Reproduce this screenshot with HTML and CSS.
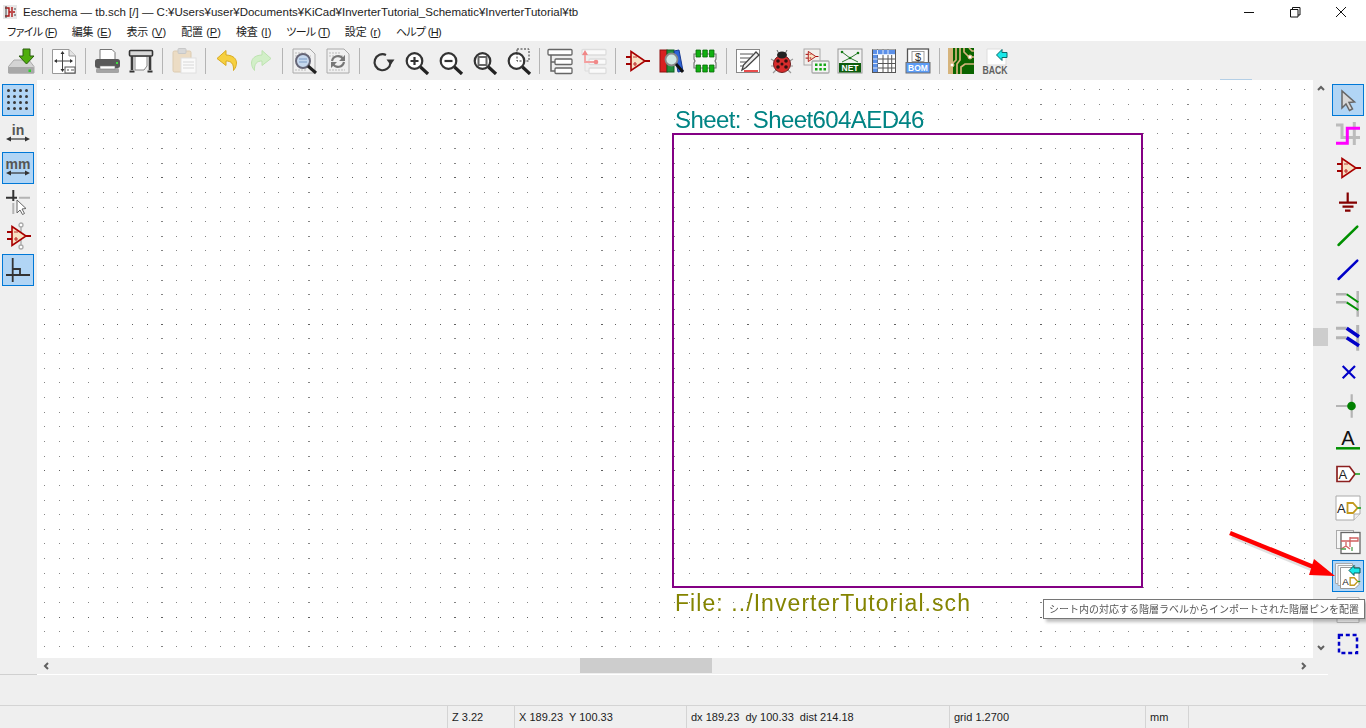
FILE: index.html
```html
<!DOCTYPE html>
<html>
<head lang="ja">
    <meta charset="UTF-8">
    <title>Eeschema</title>
    <link rel="stylesheet" href="styles.css">
</head>
<body>
<svg class="defs">
    <symbol id="opamp" viewBox="0 0 28 28">
        <path d="M3 10h5M3 17h5M22 14h5" stroke="#a00000" stroke-width="1.8" fill="none"/>
        <path d="M8 4.5L22 14 8 23.5z" fill="#f7e2c4" stroke="#a80000" stroke-width="1.6"/>
        <path d="M10 10h4M10 17h4M12 15v4" stroke="#c03030" stroke-width="1.2" fill="none"/>
    </symbol>
    <symbol id="lens" viewBox="0 0 28 28">
        <circle cx="11.5" cy="14" r="7.8" fill="#fff" stroke="#333" stroke-width="2.2"/>
        <path d="M17.5 20l7.5 7" stroke="#222" stroke-width="3.2"/>
    </symbol>
    <symbol id="adlabel" viewBox="0 0 28 28">
        <text x="3" y="19" class="ad-text">A</text>
        <path d="M13.5 9h5.5l4.5 5-4.5 5h-5.5z" fill="#fff" stroke="#c49a20" stroke-width="1.8"/>
        <path d="M23.5 14H27" stroke="#20a020" stroke-width="1.6"/>
    </symbol>
</svg>

<div class="titlebar">
    <svg class="app-icon" viewBox="0 0 14 14">
        <rect width="14" height="14" fill="#e8e8e8"/>
        <path d="M2 3h4v8H2M6 7h6M9 2v4M9 8v4" stroke="#b01818" stroke-width="1.4" fill="none"/>
        <path d="M3 1v12M11 4h2M11 10h2" stroke="#444" stroke-width="1" fill="none"/>
    </svg>
    <span class="title-text">Eeschema — tb.sch [/] — C:¥Users¥user¥Documents¥KiCad¥InverterTutorial_Schematic¥InverterTutorial¥tb</span>
    <div class="win-btn">
        <svg width="12" height="12" viewBox="0 0 12 12"><path d="M1 6.5h10" stroke="#111" fill="none"/></svg>
    </div>
    <div class="win-btn">
        <svg width="12" height="12" viewBox="0 0 12 12"><path d="M1.5 3.5h7.5v7.5h-7.5zM3.5 3.5v-2h7.5v7.5h-2" stroke="#111" fill="none"/></svg>
    </div>
    <div class="win-btn">
        <svg width="12" height="12" viewBox="0 0 12 12"><path d="M1 1l10 10M11 1l-10 10" stroke="#111" fill="none"/></svg>
    </div>
</div>

<ul class="menubar">
    <li class="kana">ファイル (<u>F</u>)</li>
    <li>編集 (<u>E</u>)</li>
    <li>表示 (<u>V</u>)</li>
    <li>配置 (<u>P</u>)</li>
    <li>検査 (<u>I</u>)</li>
    <li class="kana">ツール (<u>T</u>)</li>
    <li>設定 (<u>r</u>)</li>
    <li class="kana">ヘルプ (<u>H</u>)</li>
</ul>

<div class="toolbar">
    <!-- save -->
    <div class="tool"><svg class="ico" viewBox="0 0 28 28">
        <path d="M7 13h15l5 6.5V26H1.5v-6.5z" fill="#d4d4d4" stroke="#aaa"/>
        <rect x="1.5" y="20" width="25.5" height="6.5" rx="1" fill="#a8a8a8"/>
        <rect x="21.5" y="22.5" width="2.5" height="2.5" fill="#30d030"/>
        <path d="M16 2h7v7h4l-7.5 8L12 9h4z" fill="#4fae0c" stroke="#2c5c10"/>
    </svg></div>
    <div class="sep"></div>
    <!-- page settings -->
    <div class="tool"><svg class="ico" viewBox="0 0 28 28">
        <path d="M2.5 2.5H19L25.5 9v17.5h-23z" fill="#fff" stroke="#999"/>
        <path d="M19 2.5V9h6.5" fill="#e4e4e4" stroke="#999"/>
        <path d="M12.5 5v19M5 14h17" stroke="#444"/>
        <path d="M12.5 4l-2 3h4zM12.5 25l-2-3h4zM4 14l3-2v4zM23 14l-3-2v4z" fill="#333"/>
        <rect x="15" y="20" width="10" height="6" fill="#fff" stroke="#555"/>
        <path d="M17 23h2M21 23h3" stroke="#555"/>
    </svg></div>
    <div class="sep"></div>
    <!-- print -->
    <div class="tool"><svg class="ico" viewBox="0 0 28 28">
        <path d="M7 2.5h12l3 3V13H7z" fill="#fff" stroke="#777"/>
        <rect x="2" y="12" width="25" height="9" rx="2.5" fill="#585858"/>
        <rect x="3" y="21" width="23" height="5" rx="1.5" fill="#a4a4a4"/>
        <rect x="7" y="19" width="15" height="3" fill="#fff" stroke="#777" stroke-width=".6"/>
        <rect x="23" y="15" width="2" height="2" fill="#40e040"/>
    </svg></div>
    <!-- plot -->
    <div class="tool"><svg class="ico" viewBox="0 0 28 28">
        <path d="M8 9h12v10l-3 4H8z" fill="#fff" stroke="#888"/>
        <rect x="2.5" y="3.5" width="23" height="5.5" rx="1" fill="#d8d8d8" stroke="#333" stroke-width="1.6"/>
        <path d="M5 9v14M23 9v14" stroke="#3c3c3c" stroke-width="2.6"/>
        <path d="M2.5 24.5h5M20.5 24.5h5" stroke="#333" stroke-width="2"/>
    </svg></div>
    <div class="sep"></div>
    <!-- paste, disabled -->
    <div class="tool"><svg class="ico" viewBox="0 0 28 28">
        <rect x="3" y="4" width="18" height="21" rx="1.5" fill="#ecdcc4" stroke="#dccbb0"/>
        <rect x="8" y="1.5" width="8" height="5" rx="1" fill="#d8d8d8" stroke="#c8c8c8"/>
        <rect x="11" y="11" width="15" height="15" fill="#fafafa" stroke="#e0e0e0"/>
        <path d="M13 15h11M13 18h11M13 21h11" stroke="#d8d8d8"/>
    </svg></div>
    <div class="sep"></div>
    <!-- undo, redo -->
    <div class="tool"><svg class="ico" viewBox="0 0 28 28">
        <path d="M13 3.5l-9 8 9 7V14c5 0 8 2.5 7.5 9.5 5-6 4.5-15-7.5-15.500z" fill="#f6d040" stroke="#d8aa20"/>
    </svg></div>
    <div class="tool"><svg class="ico" viewBox="0 0 28 28">
        <path d="M15 3.5l9 8-9 7V14c-5 0-8 2.5-7.5 9.5-5-6-4.5-15 7.5-15.500z" fill="#d2efc8" stroke="#bde3b0"/>
    </svg></div>
    <div class="sep"></div>
    <!-- find, find and replace -->
    <div class="tool"><svg class="ico" viewBox="0 0 28 28">
        <path d="M3 2h17l5 5v19H3z" fill="#f0f0f0" stroke="#aaa"/>
        <path d="M5 6h12M5 9h16M5 23h12" stroke="#bbb" stroke-dasharray="2 1"/>
        <circle cx="13" cy="14" r="7" fill="#c6d8ee" stroke="#667" stroke-width="2"/>
        <path d="M9 12h8M9 15h8" stroke="#7a9ac4"/>
        <path d="M18 19l8 7" stroke="#222" stroke-width="3"/>
    </svg></div>
    <div class="tool"><svg class="ico" viewBox="0 0 28 28">
        <path d="M3 2h17l5 5v19H3z" fill="#f0f0f0" stroke="#aaa"/>
        <path d="M5 6h12M5 9h16M5 23h16" stroke="#bbb" stroke-dasharray="2 1"/>
        <path d="M8 14a6 6 0 0 1 11-2M20 15a6 6 0 0 1-11 2" stroke="#777" stroke-width="2.2" fill="none"/>
        <path d="M21 8v6h-6zM7 21v-6h6z" fill="#777"/>
    </svg></div>
    <div class="sep"></div>
    <!-- redraw -->
    <div class="tool tool-wide"><svg class="ico" viewBox="0 0 28 28">
        <path d="M18 8A8 8 0 1 0 22.5 16" stroke="#333" stroke-width="2.2" fill="none"/>
        <path d="M18.5 12.5h8l-4 5.500z" fill="#333"/>
    </svg></div>
    <!-- zoom in, out, fit, selection -->
    <div class="tool"><svg class="ico" viewBox="0 0 28 28">
        <use href="#lens"/>
        <path d="M7.5 14h8M11.5 10v8" stroke="#333" stroke-width="2.2"/>
    </svg></div>
    <div class="tool"><svg class="ico" viewBox="0 0 28 28">
        <use href="#lens"/>
        <path d="M7.5 14h8" stroke="#333" stroke-width="2.2"/>
    </svg></div>
    <div class="tool"><svg class="ico" viewBox="0 0 28 28">
        <use href="#lens"/>
        <rect x="7.5" y="10" width="8" height="8" fill="none" stroke="#666" stroke-width="2"/>
    </svg></div>
    <div class="tool"><svg class="ico" viewBox="0 0 28 28">
        <use href="#lens"/>
        <rect x="12" y="2" width="12" height="12" fill="none" stroke="#333" stroke-dasharray="2 1.5"/>
    </svg></div>
    <div class="sep sep-tight"></div>
    <!-- hierarchy, leave sheet -->
    <div class="tool"><svg class="ico" viewBox="0 0 28 28">
        <path d="M5 8v16h4M5 15h4" stroke="#666" stroke-width="1.5" fill="none"/>
        <rect x="2" y="2.5" width="24" height="5.5" rx="1" fill="#fff" stroke="#666" stroke-width="1.3"/>
        <rect x="9" y="12" width="17" height="5.5" rx="1" fill="#fff" stroke="#666" stroke-width="1.3"/>
        <rect x="9" y="21" width="17" height="5.5" rx="1" fill="#fff" stroke="#666" stroke-width="1.3"/>
    </svg></div>
    <div class="tool"><svg class="ico" viewBox="0 0 28 28">
        <rect x="2" y="2.5" width="24" height="5.5" rx="1" fill="#fafafa" stroke="#ddd" stroke-width="1.3"/>
        <rect x="9" y="12" width="17" height="5.5" rx="1" fill="#fafafa" stroke="#ddd" stroke-width="1.3"/>
        <rect x="9" y="21" width="17" height="5.5" rx="1" fill="#fafafa" stroke="#ddd" stroke-width="1.3"/>
        <path d="M5 8v16h4" stroke="#ddd" fill="none"/>
        <path d="M5 7v8h10" stroke="#f4a0a0" stroke-width="1.8" fill="none"/>
        <path d="M5 3l-3 5h6z" fill="#f08888"/>
        <circle cx="16" cy="15" r="2.3" fill="#f08888"/>
    </svg></div>
    <div class="sep"></div>
    <!-- symbol editor, library browser, footprint editor -->
    <div class="tool"><svg class="ico"><use href="#opamp"/></svg></div>
    <div class="tool"><svg class="ico" viewBox="0 0 28 28">
        <rect x="3" y="3" width="7" height="22" fill="#d82020" stroke="#901010"/>
        <rect x="10" y="3" width="7" height="22" fill="#20903c" stroke="#106020"/>
        <path d="M17 4l5-1 4 21-5 1z" fill="#2c62d8" stroke="#1a3a90"/>
        <circle cx="14.5" cy="12.5" r="6" fill="#cfe6e2" stroke="#888" stroke-width="1.8"/>
        <path d="M19 17l7 8" stroke="#111" stroke-width="3"/>
    </svg></div>
    <div class="tool"><svg class="ico" viewBox="0 0 28 28">
        <path d="M3 7h22v5l-1 2 1 2v5H3v-5l1-2-1-2z" fill="#f6f6f6" stroke="#777" stroke-width="1.2"/>
        <path d="M5 3h4.5v7H5zM11.8 3h4.5v7h-4.5zM18.5 3H23v7h-4.5zM5 18h4.5v7H5zM11.8 18h4.5v7h-4.5zM18.5 18H23v7h-4.5z" fill="#10b010" stroke="#0a6a0a" stroke-width=".8"/>
    </svg></div>
    <div class="sep"></div>
    <!-- annotate -->
    <div class="tool"><svg class="ico" viewBox="0 0 28 28">
        <rect x="2.5" y="2.5" width="23" height="23" fill="#fff" stroke="#888"/>
        <path d="M6 7h13M6 11h10M6 15h7M6 19h4" stroke="#555"/>
        <path d="M8 23l1.5-5L22 5l3 3-13 12.5z" fill="#eee" stroke="#444" stroke-width="1.3"/>
        <path d="M10 24h14" stroke="#e01010" stroke-width="1.5"/>
    </svg></div>
    <!-- erc -->
    <div class="tool"><svg class="ico" viewBox="0 0 28 28">
        <path d="M3 12l5 3M3 19h5M5 26l4-4M25 12l-5 3M25 19h-5M23 26l-4-4" stroke="#999" stroke-width="1.2"/>
        <circle cx="14" cy="17" r="8.5" fill="#d82c2c" stroke="#702020"/>
        <path d="M9 3l2 4M19 3l-2 4" stroke="#666"/>
        <ellipse cx="14" cy="8" rx="5" ry="3.5" fill="#222"/>
        <circle cx="10" cy="14" r="1.8" fill="#311"/><circle cx="18" cy="14" r="1.8" fill="#311"/>
        <circle cx="10" cy="20" r="1.8" fill="#311"/><circle cx="18" cy="20" r="1.8" fill="#311"/>
        <circle cx="14" cy="17" r="1.5" fill="#311"/>
    </svg></div>
    <!-- assign footprints -->
    <div class="tool"><svg class="ico" viewBox="0 0 28 28">
        <rect x="2" y="2" width="16" height="16" fill="#f2efec" stroke="#aaa"/>
        <svg x="2" y="2" width="15" height="15" viewBox="0 0 28 28"><use href="#opamp"/></svg>
        <rect x="10" y="14" width="17" height="12" rx="1" fill="#f4f4f4" stroke="#aaa" stroke-width="1.3"/>
        <path d="M13 16.5h2.5V19H13zM17.3 16.5h2.5V19h-2.5zM21.5 16.5H24V19h-2.5zM13 21h2.5v2.5H13zM17.3 21h2.5v2.5h-2.5zM21.5 21H24v2.5h-2.5z" fill="#14a814"/>
    </svg></div>
    <!-- netlist -->
    <div class="tool"><svg class="ico" viewBox="0 0 28 28">
        <rect x="2" y="2" width="24" height="24" fill="#f2f2f2" stroke="#999"/>
        <path d="M6 5l8 6 8-5M6 15l8-4 8 4" stroke="#2c7a2c" fill="none"/>
        <circle cx="6" cy="5" r="1.3" fill="#147a14"/><circle cx="22" cy="6" r="1.3" fill="#147a14"/>
        <circle cx="14" cy="11" r="1.3" fill="#147a14"/>
        <rect x="3" y="16" width="22" height="9.5" fill="#0c5c0c"/>
        <text x="14" y="24" class="ico-text">NET</text>
    </svg></div>
    <!-- bom editor -->
    <div class="tool"><svg class="ico" viewBox="0 0 28 28">
        <rect x="2.5" y="2.5" width="23" height="23" fill="#fff"/>
        <path d="M2 3h24M2 7.5h24M2 12h24M2 16.5h24M2 21h24M2 25.5h24M2.5 2.5v23M7.5 2.5v23M13 2.5v23M18 2.5v23M25.5 2.5v23M21.7 7.5v18" stroke="#555" fill="none"/>
        <path d="M3 3h22v4.5H7.5V25H3z" fill="#5b90e8"/>
        <path d="M3 12h4.5M3 16.5h4.5M3 21h4.5M7.5 3v4.5M13 3v4.5M18 3v4.5M3 7.5h22" stroke="#dde8fa"/>
    </svg></div>
    <!-- bom -->
    <div class="tool"><svg class="ico" viewBox="0 0 28 28">
        <rect x="3.5" y="2" width="21" height="17" fill="#fff" stroke="#555" stroke-width="1.3"/>
        <rect x="8" y="4.5" width="12" height="10" fill="#fff" stroke="#888" stroke-width=".8"/>
        <text x="14" y="13.5" class="ico-dollar">$</text>
        <rect x="2" y="15.5" width="24" height="10.5" fill="#5c9cf5" stroke="#707070"/>
        <text x="14" y="23.5" class="ico-text">BOM</text>
    </svg></div>
    <div class="sep"></div>
    <!-- pcbnew, back -->
    <div class="tool"><svg class="ico" viewBox="0 0 28 28">
        <rect x="1" y="1" width="26" height="26" fill="#0a6400"/>
        <rect x="1" y="1" width="5" height="26" fill="#d6b47c"/>
        <path d="M9 1v12l-4 4v10M13 1v12l-3 4v10M17 1v4l5 5h5M22 1l3 3h2M14 27v-7l4-3h9" stroke="#d6b47c" stroke-width="1.7" fill="none"/>
        <circle cx="5" cy="18" r="2" fill="#fff" stroke="#d6b47c"/>
        <circle cx="23" cy="10" r="2" fill="#fff" stroke="#d6b47c"/>
    </svg></div>
    <div class="tool"><svg class="ico" viewBox="0 0 28 28">
        <path d="M6 2h14l5 5v11H6z" fill="#fff" stroke="#ddd"/>
        <path d="M15.5 8L21 2.5v3h5v5h-5v3z" fill="#18e8e8" stroke="#0a6a6a"/>
        <text x="14" y="26.5" textLength="25" lengthAdjust="spacingAndGlyphs" class="back-text">BACK</text>
    </svg></div>
</div>

<div class="main">
    <div class="left-tools">
        <div class="side-tool selected"><svg class="ico" viewBox="0 0 28 28">
            <path d="M4.5 4.5h0M10.5 4.5h0M16.5 4.5h0M22.5 4.5h0M4.5 10.5h0M10.5 10.5h0M16.5 10.5h0M22.5 10.5h0M4.5 16.5h0M10.5 16.5h0M16.5 16.5h0M22.5 16.5h0M4.5 22.5h0M10.5 22.5h0M16.5 22.5h0M22.5 22.5h0" stroke="#3a3a3a" stroke-width="3" stroke-linecap="round"/>
        </svg></div>
        <div class="side-tool"><svg class="ico" viewBox="0 0 28 28">
            <text x="14" y="15" class="unit-text">in</text>
            <path d="M4 19h20" stroke="#333" stroke-width="1.2"/>
            <path d="M2 19l5-2.5v5zM26 19l-5-2.5v5z" fill="#333"/>
        </svg></div>
        <div class="side-tool selected"><svg class="ico" viewBox="0 0 28 28">
            <text x="14" y="15" class="unit-text">mm</text>
            <path d="M4 19h20" stroke="#333" stroke-width="1.2"/>
            <path d="M2 19l5-2.5v5zM26 19l-5-2.5v5z" fill="#333"/>
        </svg></div>
        <div class="side-tool"><svg class="ico" viewBox="0 0 28 28">
            <path d="M15 9.7h11M9.3 15v11" stroke="#b4b4b4" stroke-width="2"/>
            <path d="M2 9.7h11M9.3 2v11" stroke="#333" stroke-width="2"/>
            <path d="M13 12v13l3-3 2.5 4.5 2-1-2.5-4.5 4-.5z" fill="#fff" stroke="#666"/>
        </svg></div>
        <div class="side-tool"><svg class="ico" viewBox="0 0 28 28">
            <path d="M17 4v20" stroke="#b0b0b0" stroke-width="1.5"/>
            <circle cx="17" cy="3" r="2" fill="#fff" stroke="#aaa" stroke-width="1.3"/>
            <circle cx="17" cy="25" r="2" fill="#fff" stroke="#aaa" stroke-width="1.3"/>
            <use href="#opamp" width="28" height="28"/>
        </svg></div>
        <div class="side-tool selected"><svg class="ico" viewBox="0 0 28 28">
            <path d="M8.7 2v24M2 19h24M9 13h7v6" stroke="#333" stroke-width="1.8" fill="none"/>
        </svg></div>
    </div>

    <div class="workspace">
        <div class="work-row">
            <div class="sheet-canvas">
                <canvas id="grid" width="1276" height="578"></canvas>
                <div class="sheet-name">Sheet: Sheet604AED46</div>
                <div class="sheet-box"></div>
                <div class="sheet-file">File: ../InverterTutorial.sch</div>
                <div class="stale-mark"></div>
            </div>
            <div class="vscroll">
                <svg class="chev" viewBox="0 0 8 8"><path d="M1 6l3-3 3 3" stroke="#606060" stroke-width="2" fill="none"/></svg>
                <div class="vthumb"></div>
                <svg class="chev chev-end" viewBox="0 0 8 8"><path d="M1 2l3 3 3-3" stroke="#606060" stroke-width="2" fill="none"/></svg>
            </div>
        </div>
        <div class="hscroll">
            <svg class="chev" viewBox="0 0 8 8"><path d="M6 1L3 4l3 3" stroke="#606060" stroke-width="2" fill="none"/></svg>
            <div class="hthumb"></div>
            <svg class="chev" viewBox="0 0 8 8"><path d="M2 1l3 3-3 3" stroke="#606060" stroke-width="2" fill="none"/></svg>
        </div>
        <div class="canvas-edge"></div>
    </div>

    <div class="right-tools">
        <div class="side-tool selected"><svg class="ico" viewBox="0 0 28 28">
            <path d="M8 5v17l4-4 3.5 6.5 3-1.5-3.500-6.500 5.500-.5z" fill="#d8d8d8" stroke="#666" stroke-width="1.5"/>
        </svg></div>
        <div class="side-tool"><svg class="ico" viewBox="0 0 28 28">
            <path d="M2 5h6v12.5h18M20.3 2v23" stroke="#bcbcbc" stroke-width="3" fill="none"/>
            <path d="M26 8.3H13.3v15H2" stroke="#ff00ff" stroke-width="3" fill="none"/>
        </svg></div>
        <div class="side-tool"><svg class="ico"><use href="#opamp"/></svg></div>
        <div class="side-tool"><svg class="ico" viewBox="0 0 28 28">
            <path d="M13.7 4.5V15M5 14.7h18M8.5 18.7h11M11 22.7h5.5" stroke="#840000" stroke-width="2.2"/>
        </svg></div>
        <div class="side-tool"><svg class="ico" viewBox="0 0 28 28">
            <path d="M4.5 23L23.3 4.7" stroke="#009000" stroke-width="2.5" stroke-linecap="round"/>
        </svg></div>
        <div class="side-tool"><svg class="ico" viewBox="0 0 28 28">
            <path d="M4.5 23L23.3 4.7" stroke="#0000c8" stroke-width="2.5" stroke-linecap="round"/>
        </svg></div>
        <div class="side-tool"><svg class="ico" viewBox="0 0 28 28">
            <path d="M2 4.3h10.7M2 12.3h10.7M23.7 1v25.7" stroke="#b4b4b4" stroke-width="2.5"/>
            <path d="M12.7 4.3l11.6 8M12.7 12.3l11.6 7.7" stroke="#009000" stroke-width="2"/>
        </svg></div>
        <div class="side-tool"><svg class="ico" viewBox="0 0 28 28">
            <path d="M2 4.3h10.7M2 13.7h10.7M23.7 1v25.7" stroke="#b4b4b4" stroke-width="3"/>
            <path d="M12.7 4.3L25 12.7M12.7 13.7L25 21.7" stroke="#0000c8" stroke-width="3.5"/>
        </svg></div>
        <div class="side-tool"><svg class="ico" viewBox="0 0 28 28">
            <path d="M8.7 8L21 20.3M21 8L8.7 20.3" stroke="#0000c8" stroke-width="2.2"/>
        </svg></div>
        <div class="side-tool"><svg class="ico" viewBox="0 0 28 28">
            <path d="M2 14h15.5M17.7 2.3v23.4" stroke="#b4b4b4" stroke-width="2.2"/>
            <circle cx="17.5" cy="14" r="4.3" fill="#008000"/>
        </svg></div>
        <div class="side-tool"><svg class="ico" viewBox="0 0 28 28">
            <text x="13.8" y="18.5" class="big-a">A</text>
            <path d="M2 22.3h24" stroke="#009000" stroke-width="2.5"/>
        </svg></div>
        <div class="side-tool"><svg class="ico" viewBox="0 0 28 28">
            <path d="M3 6.5h12.5L21 14l-5.500 7.500H3z" fill="#fff" stroke="#8c2020" stroke-width="1.7"/>
            <text x="4.5" y="19" class="ad-text">A</text>
            <path d="M21 14h5" stroke="#20a020" stroke-width="1.6"/>
        </svg></div>
        <div class="side-tool"><svg class="ico" viewBox="0 0 28 28">
            <path d="M2 2h24v18l-6 6H2z" fill="#fff" stroke="#aaa"/>
            <path d="M26 20h-6v6" fill="#eee" stroke="#aaa"/>
            <use href="#adlabel" width="28" height="28"/>
        </svg></div>
        <div class="side-tool"><svg class="ico" viewBox="0 0 28 28">
            <rect x="2.5" y="2.5" width="17" height="18" fill="#f6f6f6" stroke="#aaa"/>
            <rect x="7" y="4.5" width="19" height="21" fill="#fff" stroke="#666" stroke-width="1.3"/>
            <path d="M16 9v4h8v-3h-8M7 13h9M16 13v6M7 21l5-3 4 3M12 18v-4" stroke="#d06060" stroke-width="1.3" fill="none"/>
            <path d="M7 21h5M18 19v4" stroke="#50a050" stroke-width="1.3" fill="none"/>
        </svg></div>
        <div class="side-tool selected"><svg class="ico" viewBox="0 0 28 28">
            <path d="M1.5 1.5h17v20h-17z" fill="#f4f8fc" stroke="#aaa"/>
            <path d="M4 3.5h17v20H4z" fill="#fafafa" stroke="#aaa"/>
            <path d="M6.5 5.5H25v17l-4 4H6.5z" fill="#fff" stroke="#999"/>
            <path d="M15 8.5l5-5V6h6v5h-6v2.5z" fill="#18e8e8" stroke="#0a5a5a"/>
            <svg x="6" y="9" width="21" height="21" viewBox="0 0 28 28"><use href="#adlabel"/></svg>
        </svg></div>
        <div class="side-tool"><svg class="ico" viewBox="0 0 28 28">
            <path d="M3 1.5h22v25H3z" fill="#fafafa" stroke="#bbb"/>
        </svg></div>
        <div class="side-tool"><svg class="ico" viewBox="0 0 28 28">
            <rect x="5" y="5" width="18" height="18" fill="none" stroke="#0000c8" stroke-width="2.5" stroke-dasharray="4 2.8"/>
        </svg></div>
    </div>
</div>

<div class="msg-panel"></div>
<div class="statusbar">
    <div class="status-gap"></div>
    <div class="status-item status-zoom">Z 3.22</div>
    <div class="status-item status-abs">X 189.23&nbsp; Y 100.33</div>
    <div class="status-item status-rel">dx 189.23&nbsp; dy 100.33&nbsp; dist 214.18</div>
    <div class="status-item status-grid">grid 1.2700</div>
    <div class="status-item status-unit">mm</div>
    <div class="status-item"></div>
</div>

<div class="tooltip">シート内の対応する階層ラベルからインポートされた階層ピンを配置</div>
<svg class="red-arrow" viewBox="0 0 1366 728">
    <path d="M1231 533L1316 568" stroke="#000" stroke-opacity=".12" stroke-width="5" transform="translate(1 3)"/>
    <path d="M1230 533L1316 568" stroke="#ff0000" stroke-width="4.5"/>
    <path d="M1335 576L1314 559 1309 575z" fill="#ff0000"/>
</svg>
<script src="script.js"></script>
</body>
</html>
```
FILE: styles.css
```css
*{
    margin: 0;
    padding: 0;
    box-sizing: border-box;
}
ul,ol{
    list-style: none;
}
body{
    width: 1366px;
    height: 728px;
    overflow: hidden;
    position: relative;
    display: flex;
    flex-direction: column;
    background: #ffffff;
    font-family: "Liberation Sans", "Noto Sans CJK JP", sans-serif;
    font-size: 12px;
    color: #1c1c1c;
}
.defs{
    display: none;
}
.titlebar{
    height: 24px;
    display: flex;
    align-items: center;
    padding-right: 2px;
}
.app-icon{
    width: 14px;
    height: 14px;
    margin-left: 3px;
    margin-right: 6px;
}
.title-text{
    flex: 1;
    font-size: 11.5px;
}
.win-btn{
    width: 46px;
    height: 24px;
    display: flex;
    align-items: center;
    justify-content: center;
}
.menubar{
    height: 17px;
    display: flex;
    gap: 15px;
    padding-left: 7px;
    font-family: "Liberation Sans", "Noto Sans CJK JP", sans-serif;
    font-size: 11px;
    font-feature-settings: "palt";
    line-height: 17px;
}
.menubar .kana{
    letter-spacing: -0.7px;
}
.toolbar{
    height: 39px;
    display: flex;
    align-items: center;
    padding-left: 4px;
    background: #efefef;
}
.tool{
    width: 34px;
    height: 39px;
    display: flex;
    align-items: center;
    justify-content: center;
}
.tool-wide{
    width: 36px;
}
.sep{
    width: 1px;
    height: 26px;
    margin: 0 4px;
    background: #b4b4b4;
}
.sep-tight{
    margin: 0 3px;
}
.ico{
    width: 28px;
    height: 28px;
    display: block;
}
.ico-text{
    font-family: "Liberation Sans", sans-serif;
    font-size: 8.5px;
    font-weight: bold;
    fill: #ffffff;
    text-anchor: middle;
}
.ico-dollar{
    font-family: "Liberation Sans", sans-serif;
    font-size: 11px;
    fill: #333333;
    text-anchor: middle;
}
.back-text{
    font-family: "Liberation Sans", sans-serif;
    font-size: 11px;
    font-weight: bold;
    fill: #606060;
    text-anchor: middle;
}
.unit-text{
    font-family: "Liberation Sans", sans-serif;
    font-size: 14px;
    font-weight: bold;
    fill: #555555;
    text-anchor: middle;
}
.big-a{
    font-family: "Liberation Sans", sans-serif;
    font-size: 20px;
    fill: #111111;
    text-anchor: middle;
}
.ad-text{
    font-family: "Liberation Sans", sans-serif;
    font-size: 13px;
    fill: #222222;
}
.main{
    height: 595px;
    display: flex;
    background: #efefef;
}
.left-tools{
    width: 37px;
    padding: 4px 0 0 2px;
    border-bottom: 1px solid #d0d0d0;
}
.side-tool{
    width: 32px;
    height: 32px;
    margin-bottom: 2px;
    display: flex;
    align-items: center;
    justify-content: center;
    border: 1px solid transparent;
}
.side-tool.selected{
    background: #b1d5f5;
    border-color: #0078d7;
}
.workspace{
    width: 1291px;
    display: flex;
    flex-direction: column;
}
.work-row{
    height: 578px;
    display: flex;
}
.sheet-canvas{
    width: 1276px;
    position: relative;
    background: #ffffff;
}
#grid{
    display: block;
}
.sheet-name,.sheet-file{
    position: absolute;
    left: 638px;
    font-family: "Liberation Sans", sans-serif;
    white-space: nowrap;
}
.sheet-name{
    top: 26px;
    font-size: 24px;
    line-height: 28px;
    letter-spacing: -0.6px;
    word-spacing: 6px;
    color: #008484;
}
.sheet-file{
    top: 509px;
    font-size: 23px;
    line-height: 28px;
    letter-spacing: 1.07px;
    color: #848400;
}
.sheet-box{
    position: absolute;
    left: 635px;
    top: 53px;
    width: 471px;
    height: 455px;
    border: 2px solid #840084;
}
.stale-mark{
    position: absolute;
    left: 1183px;
    top: -1px;
    width: 32px;
    height: 1px;
    background: #b4cfe6;
}
.vscroll{
    width: 15px;
    display: flex;
    flex-direction: column;
    align-items: center;
    padding: 4px 0 6px;
}
.chev{
    width: 8px;
    height: 8px;
    flex: none;
}
.vthumb{
    width: 15px;
    height: 18px;
    margin-top: 236px;
    background: #cdcdcd;
}
.chev-end{
    margin-top: auto;
}
.hscroll{
    height: 16px;
    width: 1276px;
    display: flex;
    align-items: center;
    padding: 0 5px;
}
.hthumb{
    width: 132px;
    height: 15px;
    margin: 0 auto 1px 530px;
    background: #cdcdcd;
}
.canvas-edge{
    height: 1px;
    width: 1291px;
    background: #ffffff;
}
.right-tools{
    width: 38px;
    padding: 4px 0 0 4px;
}
.msg-panel{
    height: 31px;
    background: #efefef;
    border-bottom: 1px solid #d4d4d4;
}
.statusbar{
    height: 22px;
    display: flex;
    background: #efefef;
    font-family: "Liberation Sans", sans-serif;
    font-size: 11px;
    line-height: 23px;
}
.status-gap{
    width: 447px;
}
.status-item{
    padding-left: 4px;
    border-left: 1px solid #d4d4d4;
}
.status-zoom{
    width: 67px;
}
.status-abs{
    width: 172px;
}
.status-rel{
    width: 263px;
}
.status-grid{
    width: 196px;
}
.status-unit{
    width: 43px;
}
.tooltip{
    position: absolute;
    left: 1043px;
    top: 599px;
    width: 322px;
    height: 20px;
    border: 1px solid #767676;
    background: #ffffff;
    color: #575757;
    font-family: "Noto Sans CJK JP", sans-serif;
    font-size: 10px;
    line-height: 18px;
    padding-left: 5px;
    white-space: nowrap;
    box-shadow: 3px 3px 3px rgba(0,0,0,0.25);
}
.red-arrow{
    position: absolute;
    left: 0;
    top: 0;
    width: 1366px;
    height: 728px;
    pointer-events: none;
}
```
FILE: script.js
```js
var oGrid = document.getElementById('grid');
var ctx = oGrid.getContext('2d');
var iStep = 14.65;
for(var j = 0;j<40;j++){
    for(var i = 0;i<88;i++){
        var x = Math.round(7 + i*iStep);
        var y = Math.round(9.3 + j*iStep);
        // every tenth column is drawn wider, every tenth row darker
        var w = i%10 == 8 ? 2 : 1;
        ctx.fillStyle = j%10 == 6 ? '#606060' : '#858585';
        ctx.fillRect(x,y,w,1);
    }
}
```
